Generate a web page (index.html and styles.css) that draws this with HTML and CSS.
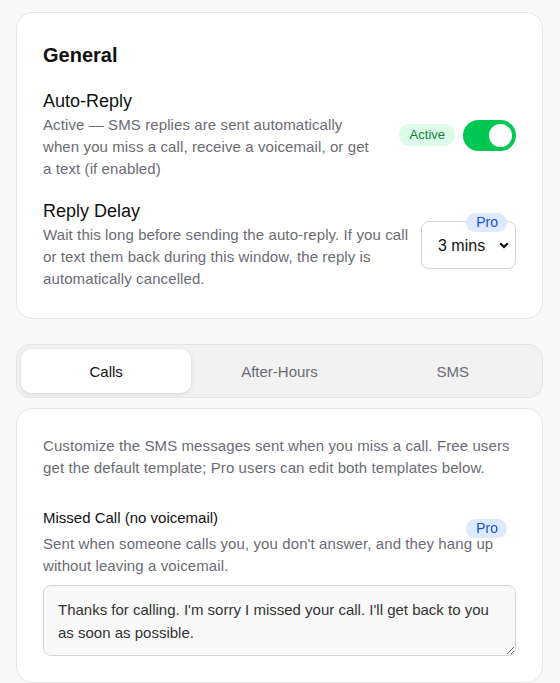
FILE: index.html
```html
<!DOCTYPE html>
<html lang="en">
<head>
    <meta charset="UTF-8">
    <meta name="viewport" content="width=device-width, initial-scale=1.0">
    <title>Auto-Reply Settings</title>
    <link rel="stylesheet" href="styles.css">
</head>
<body>
    <div class="page">
        <div class="card general">
            <h2>General</h2>

            <div class="setting">
                <div class="setting-text">
                    <h3>Auto-Reply</h3>
                    <p>Active — SMS replies are sent automatically when you miss a call, receive a voicemail, or get a text (if enabled)</p>
                </div>
                <div class="setting-control">
                    <span class="status-badge">Active</span>
                    <label class="switch">
                        <input type="checkbox" checked>
                        <span class="slider"></span>
                    </label>
                </div>
            </div>

            <div class="setting">
                <div class="setting-text">
                    <h3>Reply Delay</h3>
                    <p>Wait this long before sending the auto-reply. If you call or text them back during this window, the reply is automatically cancelled.</p>
                </div>
                <div class="setting-control select-wrap">
                    <select id="delay">
                        <option>1 min</option>
                        <option selected>3 mins</option>
                        <option>5 mins</option>
                        <option>10 mins</option>
                    </select>
                    <svg class="chevron" width="10" height="7" viewBox="0 0 10 7">
                        <path d="M1.2 1.2 L5 5 L8.8 1.2" fill="none" stroke="#111" stroke-width="2.2"/>
                    </svg>
                    <span class="pro-badge">Pro</span>
                </div>
            </div>
        </div>

        <div class="tabs">
            <button class="tab active">Calls</button>
            <button class="tab">After-Hours</button>
            <button class="tab">SMS</button>
        </div>

        <div class="card templates">
            <p class="intro">Customize the SMS messages sent when you miss a call. Free users get the default template; Pro users can edit both templates below.</p>

            <div class="field">
                <label for="missed">Missed Call (no voicemail)</label>
                <p class="hint">Sent when someone calls you, you don't answer, and they hang up without leaving a voicemail.</p>
                <span class="pro-badge">Pro</span>
                <textarea id="missed" rows="2">Thanks for calling. I'm sorry I missed your call. I'll get back to you as soon as possible.</textarea>
            </div>
        </div>
    </div>
</body>
</html>
```

FILE: styles.css
```css
* {
    box-sizing: border-box;
}
body {
    font-family: "Liberation Sans", Arial, sans-serif;
    background-color: #f9f9f9;
    color: #111;
    margin: 0;
    padding: 0;
}
.page {
    padding: 12px 17px 12px 16px;
    display: flex;
    flex-direction: column;
}
.card {
    background: white;
    border: 1px solid #e5e5e5;
    border-radius: 16px;
    padding: 26px 26px;
}
.general {
    padding-bottom: 28px;
}
h2 {
    font-size: 20px;
    line-height: 28px;
    margin: 2px 0 21px;
}
.setting {
    display: flex;
    align-items: center;
    gap: 8px;
}
.setting + .setting {
    margin-top: 20px;
}
.setting-text {
    flex: 1;
}
h3 {
    font-size: 18px;
    font-weight: normal;
    line-height: 22px;
    margin: 0 0 2px;
}
.setting-text p,
.intro,
.hint {
    font-size: 15px;
    line-height: 22px;
    letter-spacing: 0.1px;
    color: #6b6b75;
    margin: 0;
}
.setting-control {
    display: flex;
    align-items: center;
    gap: 8px;
}
.status-badge {
    margin-left: 12px;
    background: #dcfce7;
    color: #15803d;
    font-size: 13px;
    line-height: 22px;
    padding: 0 10px 0 11px;
    border-radius: 11px;
}
.switch {
    position: relative;
    display: inline-block;
    width: 53px;
    height: 31px;
}
.switch input {
    opacity: 0;
    width: 0;
    height: 0;
}
.slider {
    position: absolute;
    inset: 0;
    background: #ccc;
    border-radius: 16px;
    cursor: pointer;
}
.slider::before {
    content: "";
    position: absolute;
    width: 23px;
    height: 23px;
    left: 4px;
    top: 4px;
    background: white;
    border-radius: 50%;
}
.switch input:checked + .slider {
    background: #00c853;
}
.switch input:checked + .slider::before {
    left: 26px;
}
.select-wrap {
    position: relative;
}
select {
    appearance: none;
    width: 95px;
    height: 48px;
    padding: 0 22px 0 16px;
    border: 1px solid #d4d4d4;
    border-radius: 8px;
    background: white;
    font-family: inherit;
    font-size: 16px;
    color: #111;
    cursor: pointer;
}
.chevron {
    position: absolute;
    right: 7px;
    top: 21px;
    pointer-events: none;
}
.pro-badge {
    position: absolute;
    right: 9px;
    top: -8px;
    background: #dbeafe;
    color: #1d4ed8;
    font-size: 14px;
    line-height: 19px;
    padding: 0 9px 0 10px;
    border-radius: 10px;
}
.tabs {
    display: flex;
    gap: 3px;
    margin: 25px 0 10px;
    padding: 4px;
    background: #f2f2f2;
    border: 1px solid #e5e5e5;
    border-radius: 14px;
}
.tab {
    flex: 1;
    height: 44px;
    border: none;
    background: none;
    border-radius: 10px;
    font-family: inherit;
    font-size: 15px;
    color: #6b6b75;
    cursor: pointer;
}
.tab.active {
    background: white;
    color: #111;
    box-shadow: 0 1px 4px rgba(0, 0, 0, 0.12);
}
.templates {
    padding-top: 26px;
}
.intro {
    margin-bottom: 28px;
}
.field {
    position: relative;
}
.field label {
    display: block;
    font-size: 15px;
    line-height: 22px;
    margin-bottom: 4px;
}
.field .pro-badge {
    top: 12px;
}
textarea {
    display: block;
    width: 100%;
    height: 71px;
    margin-top: 8px;
    padding: 12px 14px;
    border: 1px solid #d4d4d4;
    border-radius: 8px;
    background: #f9f9f9;
    font-family: inherit;
    font-size: 15px;
    line-height: 23px;
    color: #333;
    resize: vertical;
}
```
